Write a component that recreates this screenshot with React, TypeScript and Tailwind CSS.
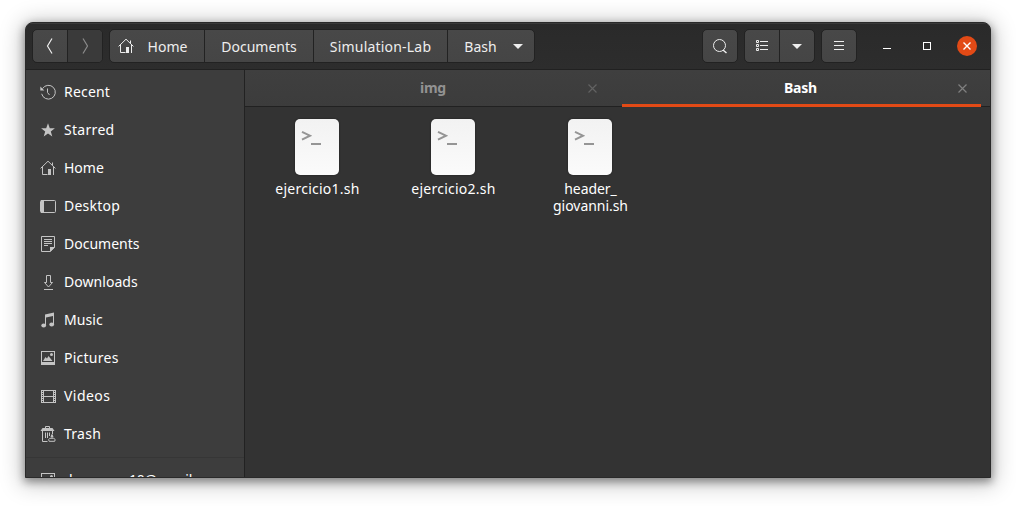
import type { ReactNode } from "react";

function Icon({ children, className = "" }: { children: ReactNode; className?: string }) {
  return (
    <svg width="16" height="16" viewBox="0 0 16 16" fill="none" stroke="currentColor" className={"block shrink-0 " + className}>
      {children}
    </svg>
  );
}

const HomeIcon = ({ className = "" }: { className?: string }) => (
  <Icon className={className}>
    <path d="M.6 8.4 8 1.2l7.4 7.2M2.5 7v7.5h5M13.5 7v8M12.5 2.5V5" />
    <path d="M8 9h3v6H8z" fill="currentColor" stroke="none" />
  </Icon>
);

const RecentIcon = () => (
  <Icon>
    <path d="M2.600 4.500A6.900 6.900 0 1 1 1.700 9.800" />
    <path d="M.3 2.500v4h4z" fill="currentColor" stroke="none" />
    <path d="M7.500 4.500v4l2 2.500" />
  </Icon>
);

const StarIcon = () => (
  <Icon>
    <path d="m8 1.2 1.8 5h5.1l-4.1 3.2 1.5 5L8 11.4l-4.3 3 1.5-5L1.1 6.2h5.1z" fill="currentColor" stroke="none" />
  </Icon>
);

const DesktopIcon = () => (
  <Icon>
    <rect x=".5" y="2.5" width="15" height="12" rx="1" />
    <path d="M1 2h3v13H1z" fill="currentColor" stroke="none" />
  </Icon>
);

const DocumentIcon = () => (
  <Icon>
    <path d="M1.5.5h13v10.8L10.3 15.500H1.5z" />
    <path d="M10 11h5l-5 5zM4 3h8v1H4zm0 2h8v1H4zm0 2h8v1H4zm0 2h4v1H4z" fill="currentColor" stroke="none" />
  </Icon>
);

const DownloadIcon = () => (
  <Icon>
    <path d="M6.500 1.500h4v7h2L8.500 13 4.500 8.500h2zM4 15.500h9" />
  </Icon>
);

const MusicIcon = () => (
  <Icon>
    <path d="M5 2.500 14 .5v12h-1V4L6 5.500V13H5z" fill="currentColor" stroke="none" />
    <ellipse cx="3.700" cy="13.500" rx="2.400" ry="1.900" fill="currentColor" stroke="none" />
    <ellipse cx="11.700" cy="12.500" rx="2.400" ry="1.900" fill="currentColor" stroke="none" />
  </Icon>
);

const PictureIcon = () => (
  <Icon>
    <path d="M1 1h14v14H1zm1 1v10h12V2z" fillRule="evenodd" fill="currentColor" stroke="none" />
    <path d="m3 11 2.500-4 1.500 1.500L8.500 6l4 5z" fill="currentColor" stroke="none" />
    <circle cx="11.500" cy="4.500" r="1.500" fill="currentColor" stroke="none" />
  </Icon>
);

const VideoIcon = () => (
  <Icon>
    <path d="M3.500 2v13M13.500 2v13M3 2.500h10M3 8.500h10M3 14.500h10" />
    <path d="M2.500 2v13M14.500 2v13" strokeDasharray="1 1" />
    <path d="M1.500 2v13M15.500 2v13" />
  </Icon>
);

const TrashIcon = () => (
  <Icon>
    <path d="M5.500 2.500v-2h4v2" />
    <path d="M2.500 2h10l2 3H.5z" fill="currentColor" stroke="none" />
    <path d="M2.500 5v10.500h5M5.500 6.500V12M7.500 6.500V12M9.500 6.500V10M12.500 5v3" />
    <path d="m12 8.500 1 2.500h-2z" fill="currentColor" />
    <path d="M9.200 15.300a2 2 0 0 1 .6-3h4a2 2 0 0 1 .9 3z" />
  </Icon>
);

const places = [
  { label: "Recent", icon: <RecentIcon />, tracking: "tracking-[0.2px]" },
  { label: "Starred", icon: <StarIcon />, tracking: "tracking-[0.3px]" },
  { label: "Home", icon: <HomeIcon />, tracking: "" },
  { label: "Desktop", icon: <DesktopIcon />, tracking: "tracking-[0.25px]" },
  { label: "Documents", icon: <DocumentIcon />, tracking: "" },
  { label: "Downloads", icon: <DownloadIcon />, tracking: "tracking-[0.05px]" },
  { label: "Music", icon: <MusicIcon />, tracking: "tracking-[0.1px]" },
  { label: "Pictures", icon: <PictureIcon />, tracking: "tracking-[0.25px]" },
  { label: "Videos", icon: <VideoIcon />, tracking: "tracking-[0.45px]" },
  { label: "Trash", icon: <TrashIcon />, tracking: "tracking-[0.25px]" },
];

function Place({ label, icon, tracking }: { label: string; icon: ReactNode; tracking: string }) {
  return (
    <div className="flex h-[38px] shrink-0 items-center gap-2 pl-3.5 text-[#c4c4c4]">
      {icon}
      <span className={"pb-0.5 whitespace-nowrap text-white " + tracking}>{label}</span>
    </div>
  );
}

function Group({ children, className }: { children: ReactNode; className: string }) {
  return (
    <div className={"flex h-[34px] shrink-0 divide-x divide-[#222] overflow-hidden rounded-[5px] border border-[#222] bg-linear-to-b from-[#484848] to-[#454545] text-[#eee] " + className}>
      {children}
    </div>
  );
}

function Cell({ children, className = "flex-1" }: { children: ReactNode; className?: string }) {
  return <div className={"flex items-center justify-center whitespace-nowrap " + className}>{children}</div>;
}

const Caret = () => (
  <svg width="10" height="5" viewBox="0 0 10 5" fill="currentColor" className="block shrink-0">
    <path d="M0 0h10L5 5z" />
  </svg>
);

function CloseTab({ className }: { className: string }) {
  return (
    <svg width="9" height="9" viewBox="0 0 9 9" fill="none" stroke="currentColor" strokeWidth="1.200" className={"block shrink-0 " + className}>
      <path d="m.5.5 8 8m0-8-8 8" />
    </svg>
  );
}

function ScriptFile({ lines, className }: { lines: string[]; className: string }) {
  return (
    <div className={"flex w-[136px] flex-col items-center " + className}>
      <div className="h-14 w-11 rounded-[5px] bg-linear-to-b from-[#f2f2f2] to-[#fbfbfb] shadow-[0_0_2px_#1c1c1c]">
        <svg width="44" height="56" viewBox="0 0 44 56" fill="none" stroke="#959595" strokeWidth="2" className="block">
          <path d="m7 12.800 8 3.900-8 3.900M16 25h10" />
        </svg>
      </div>
      <div className="mt-[5px] pl-px text-center leading-[17px]">
        {lines.map((l) => (
          <div key={l} className="whitespace-nowrap">{l}</div>
        ))}
      </div>
    </div>
  );
}

export default function App() {
  return (
    <div className="h-[506px] w-[1016px] overflow-hidden bg-white pt-[22px] pl-[25px] font-['Noto_Sans',sans-serif] text-[14px] text-white">
      <div className="flex h-[456px] w-[966px] flex-col overflow-hidden rounded-t-lg border border-[#2a2a2a] bg-[#333] shadow-[0_3px_9px_1px_rgba(0,0,0,0.38),0_3px_22px_4px_rgba(0,0,0,0.22)]">
        <header className="flex h-[47px] shrink-0 items-center border-t border-b border-t-[#3b3b3b] border-b-[#212121] bg-linear-to-b from-[#2a2a2a] to-[#2d2d2d] pb-px pl-1.5">
          <Group className="w-[71px]">
            <Cell className="w-[35px]">
              <svg width="8" height="16" viewBox="0 0 8 16" fill="none" stroke="currentColor" strokeWidth="1.200">
                <path d="M6 .5 1.500 8 6 15.500" />
              </svg>
            </Cell>
            <Cell className="flex-1 bg-[#3a3a3a] text-[#8b8b8b]">
              <svg width="8" height="16" viewBox="0 0 8 16" fill="none" stroke="currentColor" strokeWidth="1.200">
                <path d="M2 .5 6.500 8 2 15.500" />
              </svg>
            </Cell>
          </Group>
          <Group className="ml-1.5 w-[426px]">
            <Cell className="w-[95px] gap-3.5 pr-[9px]">
              <HomeIcon />
              <span>Home</span>
            </Cell>
            <Cell className="w-[109px]">Documents</Cell>
            <Cell className="w-[134px] tracking-[0.2px]">Simulation-Lab</Cell>
            <Cell className="flex-1 gap-4 pl-[5px]">
              <span>Bash</span>
              <Caret />
            </Cell>
          </Group>
          <Group className="ml-[167px] w-9">
            <Cell>
              <Icon>
                <circle cx="7.500" cy="7.500" r="6" />
                <path d="m11 12 3.500 3" strokeWidth="1.500" />
              </Icon>
            </Cell>
          </Group>
          <Group className="ml-1.5 w-[71px]">
            <Cell className="w-[35px]">
              <Icon className="-translate-y-px">
                <path d="M2.500 3.500h2v2h-2zM2.500 7.500h2v2h-2zM2.500 11.500h2v2h-2zM6 4.500h8M6 8.500h8M6 12.500h8" />
              </Icon>
            </Cell>
            <Cell>
              <Caret />
            </Cell>
          </Group>
          <Group className="ml-1.5 w-9">
            <Cell>
              <Icon>
                <path d="M3 3.500h10M3 7.500h10M3 11.500h10" />
              </Icon>
            </Cell>
          </Group>
          <div className="mt-[5px] ml-[26px] h-px w-2 bg-white" />
          <div className="ml-8 size-2 border border-white" />
          <div className="ml-[26px] flex size-5 items-center justify-center rounded-full bg-[#e24a16]">
            <svg width="8" height="8" viewBox="0 0 8 8" stroke="#fff" strokeWidth="1.400" className="block">
              <path d="m.5.5 7 7m0-7-7 7" />
            </svg>
          </div>
        </header>

        <div className="flex min-h-0 flex-1">
          <nav className="flex w-[219px] shrink-0 flex-col overflow-hidden border-r border-[#222] bg-[#3d3d3d] pt-[3px]">
            {places.map((p) => (
              <Place key={p.label} {...p} />
            ))}
            <div className="mt-[4px] mb-[3px] h-px shrink-0 bg-[#363636]" />
            <Place label="dmorenos10@gmail.com" icon={<PictureIcon />} tracking="tracking-[-0.3px]" />
          </nav>

          <main className="flex flex-1 flex-col">
            <div className="flex h-[37px] shrink-0 border-b border-[#212121] bg-linear-to-b from-[#3f3f3f] to-[#3c3c3c] font-bold">
              <div className="flex w-[377px] items-center pl-[175px] text-[#929292]">
                <span className="w-[168px] pb-0.5 tracking-[-0.3px]">img</span>
                <CloseTab className="text-[#626262]" />
              </div>
              <div className="-mb-px flex w-[359px] items-center border-b-[3px] border-[#e24a16] pt-0.5 pl-[162px]">
                <span className="w-[174px] pb-0.5 tracking-[-0.2px]">Bash</span>
                <CloseTab className="text-[#808080]" />
              </div>
            </div>
            <div className="flex pt-3 pl-1">
              <ScriptFile lines={["ejercicio1.sh"]} className="tracking-[0.25px]" />
              <ScriptFile lines={["ejercicio2.sh"]} className="tracking-[0.25px]" />
              <ScriptFile lines={["header_", "giovanni.sh"]} className="ml-px tracking-[-0.05px]" />
            </div>
          </main>
        </div>
      </div>
    </div>
  );
}
